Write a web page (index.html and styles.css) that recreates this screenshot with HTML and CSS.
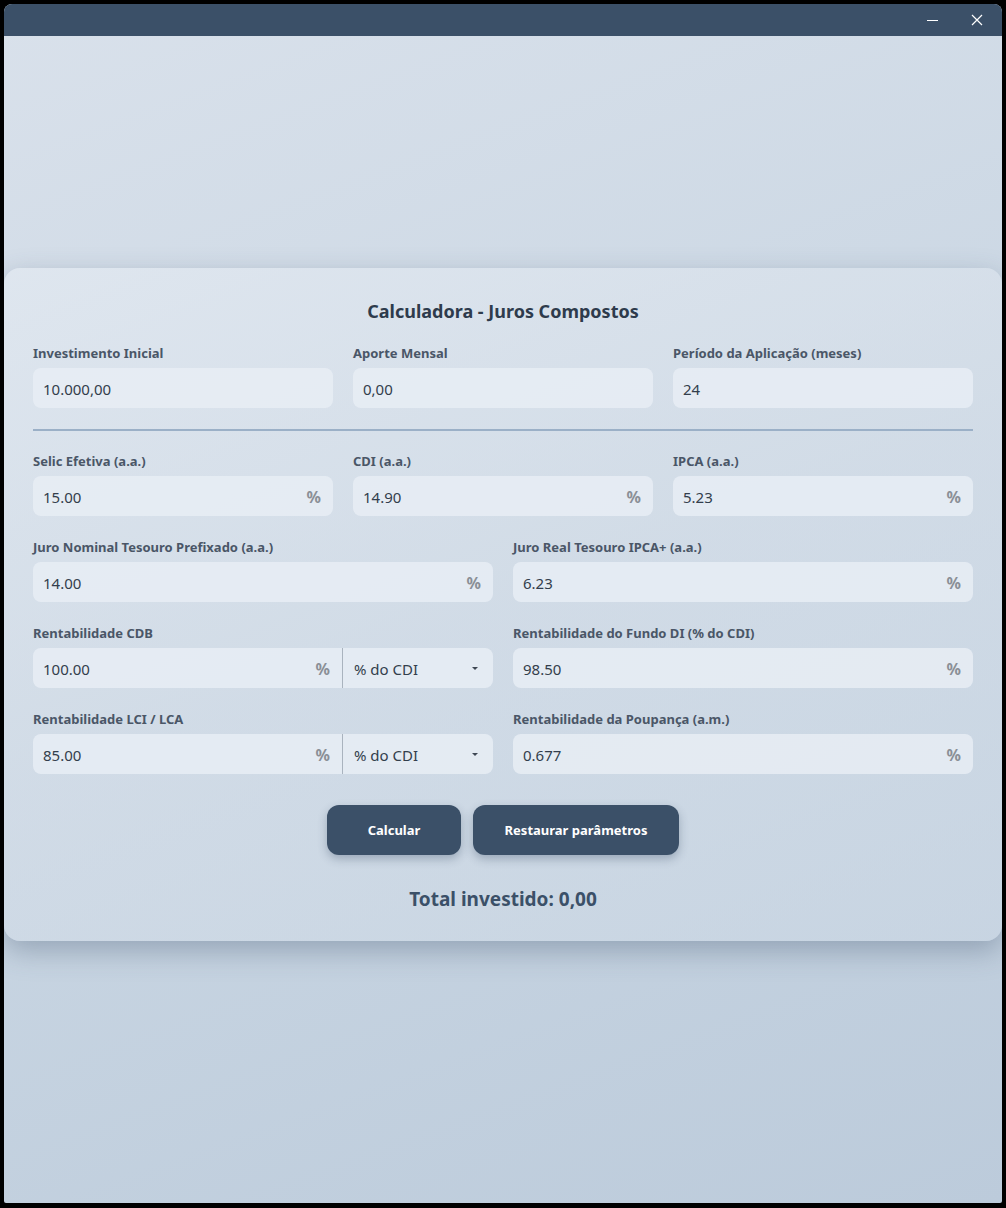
FILE: index.html
```html
<!DOCTYPE html>
<html lang="pt">
<head>
<meta charset="utf-8">
<title>Calculadora - Juros Compostos</title>
<link rel="stylesheet" href="styles.css">
</head>
<body>
<div class="window">
  <div class="titlebar">
    <button class="tb-btn" aria-label="Minimizar">
      <svg width="12" height="12" viewBox="0 0 12 12"><line x1="0" y1="6.5" x2="11" y2="6.5" stroke="#fff" stroke-width="1"/></svg>
    </button>
    <button class="tb-btn" aria-label="Fechar">
      <svg width="12" height="12" viewBox="0 0 12 12"><path d="M1 1 L11 11 M11 1 L1 11" stroke="#fff" stroke-width="1.2"/></svg>
    </button>
  </div>
  <div class="content">
    <div class="card">
      <h1 class="title">Calculadora - Juros Compostos</h1>

      <div class="grid3">
        <div class="field">
          <label class="label">Investimento Inicial</label>
          <div class="input"><span class="val">10.000,00</span></div>
        </div>
        <div class="field">
          <label class="label">Aporte Mensal</label>
          <div class="input"><span class="val">0,00</span></div>
        </div>
        <div class="field">
          <label class="label">Período da Aplicação (meses)</label>
          <div class="input"><span class="val">24</span></div>
        </div>
      </div>

      <div class="divider"></div>

      <div class="rows">
        <div class="grid3">
          <div class="field">
            <label class="label">Selic Efetiva (a.a.)</label>
            <div class="input"><span class="val">15.00</span><span class="pct">%</span></div>
          </div>
          <div class="field">
            <label class="label">CDI (a.a.)</label>
            <div class="input"><span class="val">14.90</span><span class="pct">%</span></div>
          </div>
          <div class="field">
            <label class="label">IPCA (a.a.)</label>
            <div class="input"><span class="val">5.23</span><span class="pct">%</span></div>
          </div>
        </div>

        <div class="grid2">
          <div class="field">
            <label class="label">Juro Nominal Tesouro Prefixado (a.a.)</label>
            <div class="input"><span class="val">14.00</span><span class="pct">%</span></div>
          </div>
          <div class="field">
            <label class="label">Juro Real Tesouro IPCA+ (a.a.)</label>
            <div class="input"><span class="val">6.23</span><span class="pct">%</span></div>
          </div>
        </div>

        <div class="grid2">
          <div class="field">
            <label class="label">Rentabilidade CDB</label>
            <div class="input combo">
              <div class="combo-main"><span class="val">100.00</span><span class="pct">%</span></div>
              <div class="combo-sel"><span class="val">% do CDI</span><span class="caret"></span></div>
            </div>
          </div>
          <div class="field">
            <label class="label">Rentabilidade do Fundo DI (% do CDI)</label>
            <div class="input"><span class="val">98.50</span><span class="pct">%</span></div>
          </div>
        </div>

        <div class="grid2">
          <div class="field">
            <label class="label">Rentabilidade LCI / LCA</label>
            <div class="input combo">
              <div class="combo-main"><span class="val">85.00</span><span class="pct">%</span></div>
              <div class="combo-sel"><span class="val">% do CDI</span><span class="caret"></span></div>
            </div>
          </div>
          <div class="field">
            <label class="label">Rentabilidade da Poupança (a.m.)</label>
            <div class="input"><span class="val">0.677</span><span class="pct">%</span></div>
          </div>
        </div>
      </div>

      <div class="actions">
        <button class="btn btn-calc">Calcular</button>
        <button class="btn btn-reset">Restaurar parâmetros</button>
      </div>

      <div class="total">Total investido: 0,00</div>
    </div>
  </div>
</div>
</body>
</html>
```

FILE: styles.css
```css
* { box-sizing: border-box; }
html, body { margin: 0; padding: 0; }
body {
  background: #000;
  padding: 4px 4px 5px 4px;
  font-family: "Noto Sans", "Open Sans", sans-serif;
}
.window {
  height: 1199px;
  border-radius: 8px 8px 2px 2px;
  overflow: hidden;
  display: flex;
  flex-direction: column;
  background: linear-gradient(160deg, #d9e1eb 0%, #c8d5e2 55%, #bccbdb 100%);
}
.titlebar {
  height: 32px;
  background: #3b5068;
  display: flex;
  justify-content: flex-end;
  align-items: center;
  padding-right: 19px;
  gap: 32px;
}
.tb-btn {
  background: none;
  border: 0;
  padding: 0;
  width: 12px;
  height: 12px;
  display: flex;
}
.content {
  flex: 1;
  padding-top: 232px;
}
.card {
  background: linear-gradient(160deg, rgba(226,233,241,0.75) 0%, rgba(214,223,233,0.6) 50%, rgba(204,216,229,0.6) 100%);
  border-radius: 16px;
  box-shadow: 0 10px 28px rgba(60,80,105,0.35);
  padding: 32px 29px 30px 29px;
}
.title {
  margin: 0 0 23px 0;
  text-align: center;
  font-size: 18px;
  line-height: 22px;
  font-weight: 700;
  color: #2e3b4c;
}
.grid3 {
  display: grid;
  grid-template-columns: 1fr 1fr 1fr;
  column-gap: 20px;
}
.grid2 {
  display: grid;
  grid-template-columns: 1fr 1fr;
  column-gap: 20px;
}
.rows {
  display: flex;
  flex-direction: column;
  gap: 23px;
}
.field {
  display: flex;
  flex-direction: column;
  gap: 7px;
}
.label {
  font-size: 13px;
  line-height: 16px;
  font-weight: 700;
  color: #4a5667;
  white-space: nowrap;
}
.input {
  height: 40px;
  border-radius: 8px;
  background: rgba(231,237,244,0.85);
  display: flex;
  align-items: center;
  padding: 1px 12px 0 10px;
  font-size: 15px;
  color: #333e4c;
}
.val { flex: 1; }
.pct {
  color: #8a8f96;
  font-weight: 700;
  font-size: 16px;
}
.combo { padding: 0; }
.combo-main {
  flex: 1;
  display: flex;
  align-items: center;
  height: 100%;
  padding: 1px 12px 0 10px;
  border-right: 1px solid #a9b3be;
}
.combo-sel {
  width: 150px;
  height: 100%;
  display: flex;
  align-items: center;
  padding: 1px 15px 0 11px;
}
.caret {
  width: 0;
  height: 0;
  border-left: 3.5px solid transparent;
  border-right: 3.5px solid transparent;
  border-top: 3.5px solid #3e4753;
}
.divider {
  height: 2px;
  background: #9bb0c7;
  margin: 21px 0 22px 0;
}
.actions {
  display: flex;
  justify-content: center;
  gap: 12px;
  margin-top: 31px;
}
.btn {
  height: 50px;
  border: 0;
  border-radius: 12px;
  background: #3b5068;
  color: #fff;
  font-family: inherit;
  font-size: 13px;
  font-weight: 700;
  box-shadow: 0 4px 10px rgba(40,60,85,0.3);
}
.btn-calc { width: 134px; }
.btn-reset { width: 206px; }
.total {
  margin-top: 32px;
  text-align: center;
  font-size: 19px;
  line-height: 24px;
  font-weight: 700;
  color: #3b5068;
}
```
